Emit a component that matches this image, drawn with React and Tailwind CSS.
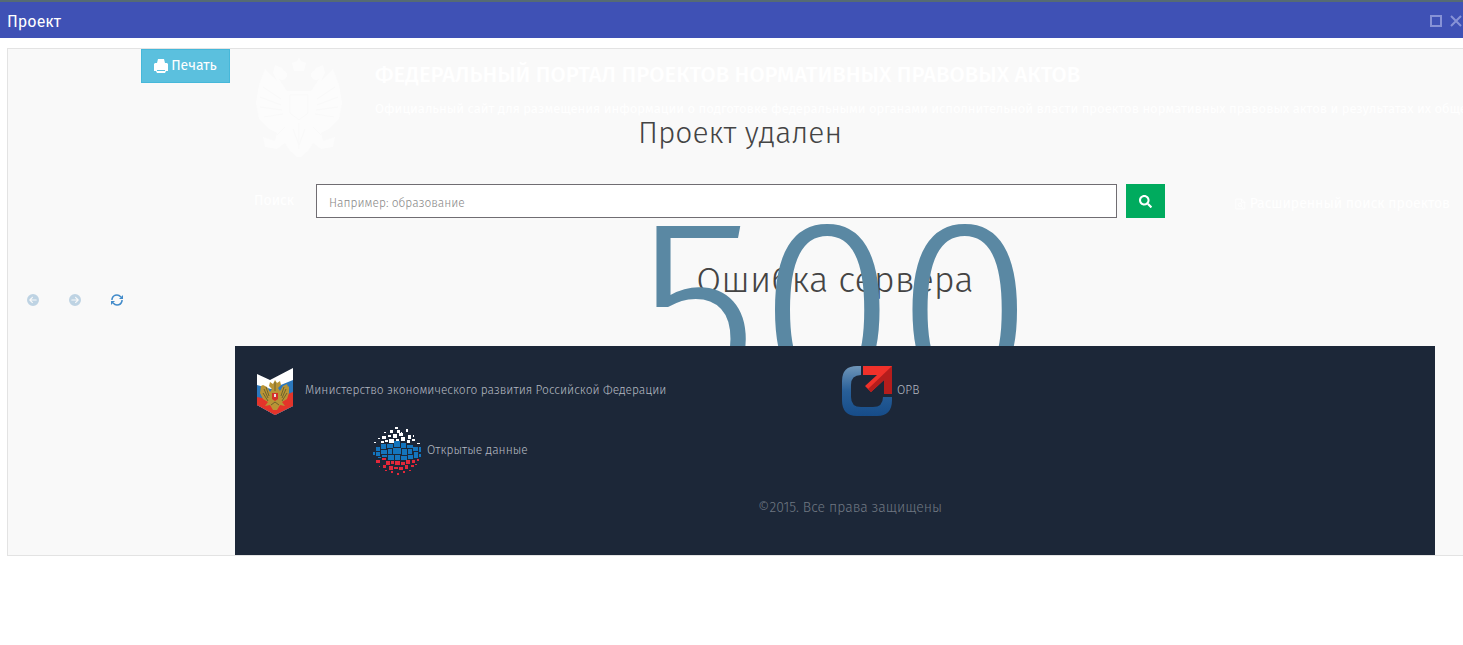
import { FaSearch } from 'react-icons/fa'
import { FaCircleArrowLeft, FaCircleArrowRight } from 'react-icons/fa6'

function PrinterIcon() {
  return (
    <svg width="14" height="14" viewBox="0 0 14 14" fill="currentColor" aria-hidden="true">
      <path d="M4 0h6l1 4h2l1 1v7h-2l-1 2H3l-1-2H0V5l1-1h2z" />
      <path d="M3 11.5h8" stroke="#5bc0de" />
    </svg>
  )
}

function RefreshIcon() {
  return (
    <svg width="12" height="12" viewBox="0 0 12 12" fill="none" aria-hidden="true">
      <path d="M1 6V5q1-4 5-4 2 0 4 2M11 6v1q-1 4-5 4-2 0-4-2" stroke="currentColor" strokeWidth="1.5" />
      <path d="M12 1v4H8zM0 11V7h4z" fill="currentColor" />
    </svg>
  )
}

function DocSearchIcon() {
  return (
    <svg width="13" height="14" viewBox="0 0 13 14" fill="none" stroke="currentColor" aria-hidden="true">
      <path d="M1 1h7l4 4v8H1zM8 1v4h4" />
      <circle cx="6" cy="8" r="2" />
      <path d="M7.5 9.5L10 12" />
    </svg>
  )
}

// Герб в шапке: белый на почти белом фоне
function Emblem() {
  return (
    <svg className="shrink-0" width="88" height="100" viewBox="0 0 88 100" aria-hidden="true">
      <g fill="#fcfcfc">
        <path d="M44 0l2 4 5 2-2 8H39l-2-8 5-2z" />
        <path d="M20 8l7 3 3 6-6 5 8 12h24l8-12-6-5 3-6 7-3 2 8-4 8 12-12 6 16 3 18-3 16-10 10-8 4 2 8 12-4-2 10-12 2-8-6-5 8-9 8-9-8-5-8-8 6-12-2-2-10 12 4 2-8-8-4-10-10-3-16 3-18 6-16 12 12-4-8z" />
        <circle cx="27" cy="18" r="5" />
        <circle cx="61" cy="18" r="5" />
      </g>
      <g stroke="#f9f9f9" strokeWidth="1" fill="none">
        <path d="M35 38h18v18l-9 7-9-7z" />
        <path d="M8 30l18 12M5 40l21 8M5 50l22 3M9 60l19-3M80 30L62 42M83 40l-21 8M83 50l-22 3M79 60l-19-3" />
        <path d="M30 70l-8 8M58 70l8 8M38 72l6 16 6-16M44 66v26" />
      </g>
    </svg>
  )
}

function MinistryLogo() {
  return (
    <svg width="36" height="47" viewBox="0 0 36 47" aria-hidden="true">
      <defs>
        <clipPath id="shield"><path d="M0 6l13 6L36 0v38L18 47 0 37z" /></clipPath>
      </defs>
      <g clipPath="url(#shield)">
        <rect width="36" height="47" fill="#fff" />
        <path d="M0 17l14 4 22-9v35H0z" fill="#2c78bd" />
        <path d="M0 29l16 3 20-8v23H0z" fill="#e3342a" />
      </g>
      <path d="M18 12l2 3 3-2 1 4-3 3 2 3 3-5 4-2 1 3 1-1v7l-2 6-5 3 3 4-5-1-3 5h-4l-3-5-5 1 3-4-5-3-3-6 1-7 2-1 4 2 3 5 2-3-3-3 1-4 3 2z" fill="#b99435" />
      <path d="M7 21l4 9M9 19l3 9M6 25l5 8M29 21l-4 9M27 19l-3 9M30 25l-5 8M14 37l4-3 4 3M18 14v9" stroke="#6e632e" fill="none" />
      <path d="M15 25h6v6l-3 2-3-2z" fill="#d5302b" />
      <path d="M17 26h2v3h-2z" fill="#e8dfdf" />
    </svg>
  )
}

function OrvLogo() {
  return (
    <svg width="50" height="50" viewBox="0 0 50 50" aria-hidden="true">
      <defs>
        <linearGradient id="frame" x1="0" y1="0" x2="0" y2="1">
          <stop offset="0" stopColor="#6f96b9" />
          <stop offset="0.5" stopColor="#285f98" />
          <stop offset="1" stopColor="#164c89" />
        </linearGradient>
      </defs>
      <path d="M19 0H15Q0 0 0 15V34Q0 50 15 50H35Q50 50 50 34V31H41Q41 41 31 41H19Q9 41 9 31V19Q9 9 19 9z" fill="url(#frame)" />
      <path d="M21 0h29v28l-8-5V14L29 26l-6-6L35 9H21z" fill="#f0312a" />
      <path d="M50 0v28h-8V14L29 26l-3-3z" fill="#b51d1c" />
    </svg>
  )
}

// x, y, ширина, высота
const WHITE_TILES = [
  [22, 0, 3, 2], [24, 3, 3, 3], [33, 2, 2, 3], [17, 3, 3, 3], [11, 5, 2, 1], [28, 5, 1, 1],
  [20, 7, 4, 4], [26, 6, 4, 3], [15, 8, 3, 2], [9, 9, 4, 3], [35, 8, 3, 4], [40, 8, 1, 2],
  [5, 11, 2, 1], [12, 13, 3, 2], [16, 12, 5, 4], [23, 12, 3, 2], [28, 10, 4, 4], [34, 13, 3, 3],
  [39, 12, 3, 2], [44, 16, 3, 1], [1, 15, 2, 1], [8, 14, 3, 2],
]
const BLUE_TILES = [
  [8, 17, 5, 5], [14, 17, 6, 4], [21, 14, 6, 6], [28, 16, 5, 5], [34, 18, 6, 3], [3, 20, 4, 4],
  [8, 23, 6, 4], [15, 22, 4, 5], [20, 21, 8, 6], [29, 22, 5, 6], [35, 22, 4, 5], [40, 20, 5, 4],
  [0, 25, 2, 3], [3, 25, 4, 4], [9, 28, 5, 2], [15, 28, 6, 5], [22, 28, 5, 5], [28, 29, 6, 4],
  [35, 28, 5, 4], [41, 25, 4, 6], [46, 20, 2, 5], [46, 27, 2, 3], [5, 30, 3, 1],
]
const RED_TILES = [
  [3, 33, 4, 3], [9, 31, 4, 2], [13, 34, 4, 4], [18, 34, 3, 3], [22, 34, 5, 4], [28, 35, 4, 3],
  [33, 33, 4, 4], [39, 33, 3, 3], [44, 32, 2, 2], [10, 38, 3, 3], [16, 39, 4, 4], [21, 40, 4, 2],
  [26, 40, 4, 3], [32, 38, 3, 4], [38, 38, 3, 2], [12, 43, 2, 1], [18, 44, 2, 2], [24, 46, 2, 2],
  [30, 44, 2, 2], [36, 43, 2, 1], [42, 37, 2, 1], [6, 39, 1, 1],
]

function OpenDataLogo() {
  const groups = [['#fff', WHITE_TILES], ['#1475bd', BLUE_TILES], ['#e3283a', RED_TILES]]
  return (
    <svg width="50" height="50" viewBox="0 0 50 50" aria-hidden="true">
      {groups.map(([fill, tiles]) => (
        <g key={fill} fill={fill}>
          {tiles.map(([x, y, w, h]) => (
            <rect key={`${x}-${y}`} x={x + 1} y={y + 1} width={w} height={h} />
          ))}
        </g>
      ))}
    </svg>
  )
}

function Toolbar() {
  return (
    <div className="w-[227px] shrink-0">
      <button type="button" className="ml-[133px] flex h-[34px] w-[89px] items-center justify-center gap-[3px] border border-[#46b8da] bg-[#5bc0de] text-sm text-white">
        <PrinterIcon />
        Печать
      </button>
      <nav className="mt-[211px] ml-[19px] flex gap-[30px]">
        <button type="button" aria-label="Назад" disabled className="text-[#bed3e3]"><FaCircleArrowLeft size={12} /></button>
        <button type="button" aria-label="Вперёд" disabled className="text-[#bed3e3]"><FaCircleArrowRight size={12} /></button>
        <button type="button" aria-label="Обновить" className="text-[#428bca]"><RefreshIcon /></button>
      </nav>
    </div>
  )
}

function Footer() {
  return (
    <footer className="relative mr-7 h-[209px] bg-[#1c2738] px-5 pt-5 text-[#b4b9c1]">
      <div className="grid grid-cols-2 gap-y-[10px] text-xs font-light">
        <a href="#ministry" className="flex h-[50px] items-center gap-3 pl-[2px]">
          <MinistryLogo />
          <span className="pb-[2px]">Министерство экономического развития Российской Федерации</span>
        </a>
        <a href="#orv" className="flex h-[50px] items-center gap-[5px] pl-[7px]">
          <OrvLogo />
          <span className="pb-[2px]">ОРВ</span>
        </a>
        <a href="#opendata" className="flex h-[50px] items-center gap-[5px] pl-[117px]">
          <OpenDataLogo />
          <span className="pb-[2px]">Открытые данные</span>
        </a>
      </div>
      <p className="mt-[22px] pl-[30px] text-center text-sm leading-5 font-light text-[#6f7782]">©2015. Все права защищены</p>
    </footer>
  )
}

export default function App() {
  return (
    <div className="overflow-hidden bg-white font-['Fira_Sans','Noto_Sans',sans-serif] text-[#444]">
      <header className="flex h-[38px] items-center justify-between border-t-2 border-[#566b73] bg-[#3f51b5] pt-1 pl-[7px] text-white">
        <h1 className="text-base">Проект</h1>
        <div className="flex items-center gap-2 pb-[2px] text-[#8792d6]">
          <button type="button" aria-label="Развернуть">
            <svg width="12" height="12" viewBox="0 0 12 12" fill="none" stroke="currentColor" strokeWidth="2"><path d="M1 1h10v10H1z" /></svg>
          </button>
          <button type="button" aria-label="Закрыть">
            <svg width="13" height="12" viewBox="0 0 13 12" fill="none" stroke="currentColor" strokeWidth="2"><path d="M1 1l10 10M11 1L1 11" /></svg>
          </button>
        </div>
      </header>

      <div className="mt-[10px] ml-[7px] flex border-y border-l border-[#e3e3e3] bg-[#f9f9f9]">
        <Toolbar />
        <main className="min-w-0 flex-1 overflow-hidden">
          <div className="flex h-[135px] gap-8 pt-2 pl-5">
            <Emblem />
            <div className="min-w-0 flex-1 whitespace-nowrap">
              <p className="mt-1 text-[22px] leading-7 font-medium text-white">ФЕДЕРАЛЬНЫЙ ПОРТАЛ ПРОЕКТОВ НОРМАТИВНЫХ ПРАВОВЫХ АКТОВ</p>
              <p className="mt-[10px] overflow-hidden text-[13px] leading-5 text-white">
                Официальный сайт для размещения информации о подготовке федеральными органами исполнительной власти проектов нормативных правовых актов и результатах их общественного обсуждения
              </p>
              <h2 className="w-[730px] text-center text-[30px] leading-7 font-light">Проект удален</h2>
            </div>
          </div>

          <form className="flex h-[34px] items-center pl-[19px]">
            <label htmlFor="query" className="w-[62px] text-sm text-white">Поиск</label>
            <input
              id="query"
              type="text"
              placeholder="Например: образование"
              className="h-[34px] min-w-0 flex-1 border border-[#706d72] bg-white px-3 pt-1 text-xs font-light placeholder:text-[#888]"
            />
            <button type="submit" aria-label="Найти" className="ml-[9px] flex h-[34px] w-[39px] items-center justify-center bg-[#00ab5e] text-white">
              <FaSearch size={13} />
            </button>
            <a href="#advanced" className="mr-[13px] ml-[70px] flex w-[215px] items-center gap-1 pt-[6px] text-sm whitespace-nowrap text-white">
              <DocSearchIcon />
              Расширенный поиск проектов
            </a>
          </form>

          <section className="relative mr-7 h-32 overflow-hidden pt-10">
            <h2 className="text-center text-4xl leading-[44px] font-light">Ошибка сервера</h2>
            <span className="absolute inset-x-0 top-0 text-center text-[250px] leading-[182px] font-light text-[#5a88a3]">500</span>
          </section>

          <Footer />
        </main>
      </div>
    </div>
  )
}
